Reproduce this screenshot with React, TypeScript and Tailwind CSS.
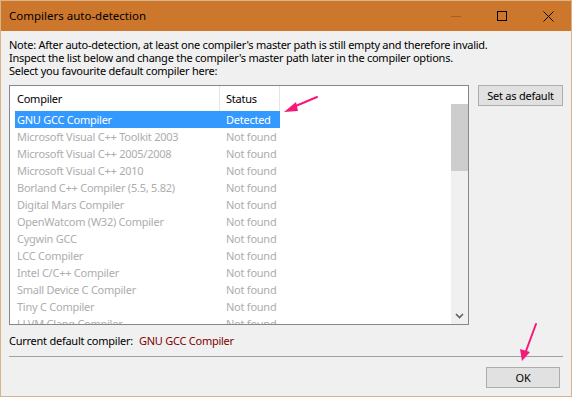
import React from "react";

const rows: [string, string][] = [
  ["GNU GCC Compiler", "Detected"],
  ["Microsoft Visual C++ Toolkit 2003", "Not found"],
  ["Microsoft Visual C++ 2005/2008", "Not found"],
  ["Microsoft Visual C++ 2010", "Not found"],
  ["Borland C++ Compiler (5.5, 5.82)", "Not found"],
  ["Digital Mars Compiler", "Not found"],
  ["OpenWatcom (W32) Compiler", "Not found"],
  ["Cygwin GCC", "Not found"],
  ["LCC Compiler", "Not found"],
  ["Intel C/C++ Compiler", "Not found"],
  ["Small Device C Compiler", "Not found"],
  ["Tiny C Compiler", "Not found"],
  ["LLVM Clang Compiler", "Not found"],
];

export default function App() {
  return (
    <div
      className="relative w-[572px] h-[397px] border border-[#dbb38b] bg-[#f0f0f0] flex flex-col text-[11px] text-black overflow-hidden"
      style={{ fontFamily: '"Noto Sans", "Open Sans", sans-serif' }}
    >
      {/* Title bar */}
      <div className="h-[30px] bg-[#cc772c] flex items-center pl-[8px] shrink-0">
        <div className="flex-1 leading-[16px] text-[11.5px] text-[#000]">Compilers auto-detection</div>
        <div className="flex items-center h-full">
          <div className="w-[46px] h-full flex items-center justify-center">
            <div className="w-[10px] h-px bg-[#a65e22]" />
          </div>
          <div className="w-[46px] h-full flex items-center justify-center">
            <div className="w-[10px] h-[10px] border border-black" />
          </div>
          <div className="w-[46px] h-full flex items-center justify-center">
            <svg width="11" height="11" viewBox="0 0 11 11">
              <path d="M0.5 0.5 L10.5 10.5 M10.5 0.5 L0.5 10.5" stroke="#000" strokeWidth="1" />
            </svg>
          </div>
        </div>
      </div>

      {/* Body */}
      <div className="flex-1 flex flex-col pl-[8px] pr-[8px] pt-[7px] tracking-[-0.25px]">
        <div className="leading-[13px] whitespace-nowrap">
          <div>Note: After auto-detection, at least one compiler's master path is still empty and therefore invalid.</div>
          <div>Inspect the list below and change the compiler's master path later in the compiler options.</div>
          <div>Select you favourite default compiler here:</div>
        </div>

        <div className="flex mt-[8px] gap-[9px] items-start">
          {/* List */}
          <div className="w-[460px] h-[240px] border border-[#828790] bg-white flex">
            <div className="flex-1 flex flex-col overflow-hidden">
              <div className="h-[25px] flex shrink-0 leading-[16px]">
                <div className="w-[210px] pl-[7px] flex items-center border-r border-[#e5e5e5]">Compiler</div>
                <div className="w-[60px] pl-[6px] flex items-center border-r border-[#e5e5e5]">Status</div>
              </div>
              {rows.map(([name, status], i) => {
                const sel = i === 0;
                return (
                  <div key={name} className="h-[17px] flex shrink-0 pl-[5px] leading-[17px]">
                    <div
                      className={
                        "flex " + (sel ? "bg-[#3399ff] text-white" : "text-[#adadad]")
                      }
                    >
                      <div className="w-[205px] pl-[2px] whitespace-nowrap">{name}</div>
                      <div className="w-[60px] pl-[6px] whitespace-nowrap">{status}</div>
                    </div>
                  </div>
                );
              })}
            </div>
            {/* Scrollbar */}
            <div className="w-[17px] flex flex-col shrink-0">
              <div className="h-[18px] bg-white shrink-0" />
              <div className="h-[67px] bg-[#cdcdcd] shrink-0" />
              <div className="flex-1 bg-[#f0f0f0]" />
              <div className="h-[17px] bg-[#f0f0f0] flex items-center justify-center shrink-0">
                <svg width="9" height="6" viewBox="0 0 9 6">
                  <path d="M1 1 L4.5 4.5 L8 1" fill="none" stroke="#606060" strokeWidth="1.6" />
                </svg>
              </div>
            </div>
          </div>

          <button className="w-[85px] h-[21px] border border-[#adadad] bg-[#e1e1e1] leading-[16px] flex items-center justify-center whitespace-nowrap">
            Set as default
          </button>
        </div>

        <div className="mt-[9px] leading-[13px] flex whitespace-nowrap">
          <span>Current default compiler:</span>
          <span className="ml-[6px] text-[#800000]">GNU GCC Compiler</span>
        </div>

        <div className="mt-[9px] h-px bg-[#a0a0a0]" />

        <div className="flex justify-end mt-[10px] pr-[3px]">
          <button className="w-[74px] h-[21px] border border-[#adadad] bg-[#e1e1e1] flex items-center justify-center leading-[16px]">
            OK
          </button>
        </div>
      </div>

      {/* Annotation arrows */}
      <svg className="absolute left-0 top-0 pointer-events-none" width="572" height="397">
        <line x1="316" y1="96" x2="290" y2="107" stroke="#f5197a" strokeWidth="2" strokeLinecap="round" />
        <polygon points="283,111 295,101 297,110" fill="#f5197a" />
        <line x1="535" y1="323" x2="525" y2="350" stroke="#f5197a" strokeWidth="2" strokeLinecap="round" />
        <polygon points="521,360 519,348 529,351" fill="#f5197a" />
      </svg>
    </div>
  );
}
